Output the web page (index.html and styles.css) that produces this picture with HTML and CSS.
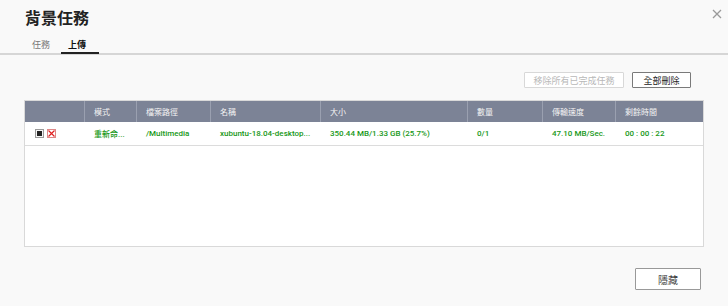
FILE: index.html
```html
<!DOCTYPE html>
<html lang="zh-Hant">
<head>
    <meta charset="UTF-8">
    <link rel="stylesheet" href="styles.css">
    <title>背景任務</title>
</head>
<body>
    <div class="dialog">
        <div class="close">
            <svg width="10" height="10" viewBox="0 0 10 10"><path d="M1 1L9 9M9 1L1 9" stroke="#9a9a9a" stroke-width="1.3"/></svg>
        </div>
        <h1>背景任務</h1>

        <div class="tabs">
            <span class="tab">任務</span>
            <span class="tab active">上傳</span>
        </div>

        <div class="toolbar">
            <button class="btn disabled">移除所有已完成任務</button>
            <button class="btn">全部刪除</button>
        </div>

        <div class="grid">
            <div class="row head">
                <div class="c0"></div>
                <div class="c1">模式</div>
                <div class="c2">檔案路徑</div>
                <div class="c3">名稱</div>
                <div class="c4">大小</div>
                <div class="c5">數量</div>
                <div class="c6">傳輸速度</div>
                <div class="c7">剩餘時間</div>
            </div>
            <div class="row item">
                <div class="c0 actions">
                    <span class="ico stop"><span></span></span>
                    <span class="ico cancel">
                        <svg width="7" height="7" viewBox="0 0 7 7"><path d="M0.5 0.5L6.5 6.5M6.5 0.5L0.5 6.5" stroke="#e02020" stroke-width="1.2"/></svg>
                    </span>
                </div>
                <div class="c1">重新命...</div>
                <div class="c2">/Multimedia</div>
                <div class="c3">xubuntu-18.04-desktop...</div>
                <div class="c4">350.44 MB/1.33 GB (25.7%)</div>
                <div class="c5">0/1</div>
                <div class="c6">47.10 MB/Sec.</div>
                <div class="c7">00 : 00 : 22</div>
            </div>
        </div>

        <div class="footer">
            <button class="btn big">隱藏</button>
        </div>
    </div>
</body>
</html>
```

FILE: styles.css
```css
body {
    margin: 0;
    background: #f9f9f9;
    font-family: Roboto, "Noto Sans CJK TC", sans-serif;
    color: #333;
}

.dialog {
    position: relative;
    width: 728px;
    height: 306px;
}

.close {
    position: absolute;
    top: 4px;
    right: 6px;
    width: 10px;
    height: 10px;
}

h1 {
    margin: 0;
    padding: 8px 0 0 25px;
    font-size: 16px;
    line-height: 22px;
    font-weight: bold;
    color: #222;
}

.tabs {
    display: flex;
    margin-top: 8px;
    padding-left: 24px;
    border-bottom: 2px solid #d6d6d6;
    height: 15px;
}

.tab {
    font-size: 9px;
    line-height: 14px;
    color: #777;
    padding: 0 8px;
}

.tab.active {
    margin-left: 3px;
    color: #111;
    font-weight: bold;
    border-bottom: 2px solid #222;
    margin-bottom: -2px;
    height: 14px;
    padding: 0 13px 0 7px;
}

.toolbar {
    display: flex;
    justify-content: flex-end;
    gap: 8px;
    padding: 17px 37px 0 0;
}

.btn {
    font-family: Roboto, "Noto Sans CJK TC", sans-serif;
    font-size: 9px;
    height: 16px;
    width: 59px;
    padding: 0;
    background: #fff;
    border: 1px solid #7a7a7a;
    color: #222;
    border-radius: 1px;
}

.btn.disabled {
    width: 100px;
    border-color: #d8d8d8;
    color: #b8b8b8;
}

.grid {
    margin: 12px 24px 0 24px;
    height: 145px;
    background: #fff;
    border: 1px solid #d9d9d9;
    font-size: 8px;
}

.row {
    display: flex;
    height: 22px;
    align-items: center;
}

.row > div {
    padding-left: 9px;
    box-sizing: border-box;
    white-space: nowrap;
    height: 100%;
    display: flex;
    align-items: center;
}

.head {
    background: #7c8396;
    color: #f4f4f4;
    height: 21px;
}

.row > div + div {
    border-left: 1px solid transparent;
}

.head > div + div {
    border-left-color: #9aa0b0;
}

.item {
    color: #179817;
    font-weight: 500;
    height: 23px;
    border-bottom: 1px solid #dcdcdc;
}

.c0 { width: 59px; }
.c1 { width: 52px; }
.c2 { width: 74px; }
.c3 { width: 110px; }
.c4 { width: 147px; }
.c5 { width: 75px; }
.c6 { width: 73px; }
.c7 { flex: 1; }

.actions {
    gap: 3px;
    padding-left: 10px !important;
}

.ico {
    width: 7px;
    height: 7px;
    border: 1px solid #9a9a9a;
    display: flex;
    align-items: center;
    justify-content: center;
    background: #f4f4f4;
}

.stop span {
    width: 5px;
    height: 5px;
    background: #222;
}

.cancel {
    border-color: #d88;
    background: #fff;
}

.footer {
    display: flex;
    justify-content: flex-end;
    padding: 21px 27px 0 0;
}

.btn.big {
    width: 66px;
    height: 22px;
    font-size: 10px;
    color: #444;
    border-color: #999;
}
```
